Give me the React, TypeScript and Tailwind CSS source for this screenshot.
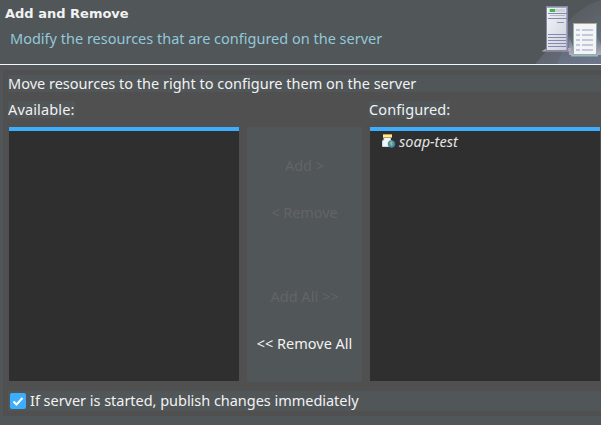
import React from "react";

function ServerBanner() {
  return (
    <svg className="h-16 w-[68px] shrink-0" viewBox="533 0 68 64" fill="none">
      <defs>
        <linearGradient id="beam" x1="560" y1="5" x2="595" y2="64" gradientUnits="userSpaceOnUse">
          <stop offset="0" stopColor="#54595c" />
          <stop offset="1" stopColor="#6b7180" />
        </linearGradient>
        <linearGradient id="inner" x1="575" y1="10" x2="590" y2="64" gradientUnits="userSpaceOnUse">
          <stop offset="0" stopColor="#585e63" />
          <stop offset="1" stopColor="#6d768a" />
        </linearGradient>
        <linearGradient id="tower" x1="0" y1="0" x2="1" y2="1">
          <stop offset="0" stopColor="#f2f4f6" />
          <stop offset="1" stopColor="#cdd1da" />
        </linearGradient>
        <linearGradient id="shade" x1="0" y1="0" x2="0" y2="1">
          <stop offset="0" stopColor="#aaa2b1" stopOpacity="0" />
          <stop offset="1" stopColor="#b4abba" />
        </linearGradient>
      </defs>
      <path d="M536 63C550 48 559 29 575 15Q588 3 601 0V64H536Z" fill="url(#beam)" />
      <path d="M557 64C564 45 574 28 601 12V64Z" fill="url(#inner)" />
      <path d="M542 51L547 48H571V51.5H542Z" fill="#a9a5b3" />
      <path d="M568 34L573 46V55H569Z" fill="url(#shade)" />
      <path d="M597 36L601 44V55H597Z" fill="url(#shade)" />
      <rect x="546.5" y="6.5" width="21" height="44" fill="url(#tower)" stroke="#8587ad" />
      <path d="M547 7.5H567M566.5 8V50" stroke="#a3a6c0" />
      <rect x="549" y="9" width="16" height="3" fill="#c9d3d0" />
      <rect x="550" y="9" width="5" height="3" fill="#42b74d" />
      <path d="M548 13.5H567M548 18.5H567M548 34.5H566M548 37.5H566M548 40.5H566M548 43.5H566M548 46.5H566" stroke="#8587b1" />
      <path d="M550 15.5H565" stroke="#b3b6cd" />
      <path d="M557 22.5H564" stroke="#8b91b7" />
      <path d="M571 55H598V56.5H571Z" fill="#a3b6b7" />
      <rect x="573.5" y="23.5" width="23" height="31" fill="#f2f4f6" stroke="#8daeae" />
      <path d="M573 23.5H597" stroke="#b8a58c" />
      <path d="M576 30H580M582 30H593M576 35H580M582 35H593M576 40H580M582 40H593M576 45H580M582 45H593M576 50H580M582 50H593" stroke="#b4bbd2" strokeWidth="1.7" />
    </svg>
  );
}

function ModuleIcon() {
  return (
    <svg className="h-4 w-4 shrink-0" viewBox="0 0 16 16">
      <path d="M3 4.5H9.5V6.5L10.5 8V13.5H1.5V8L3 6.5Z" fill="#f2f6fb" stroke="#c7d6e8" />
      <rect x="2" y="1" width="9" height="4" fill="#f6e7b8" />
      <path d="M2 1.5H11M2 4.5H11" stroke="#c6a43a" />
      <circle cx="10.5" cy="11" r="3.4" fill="#4f91b5" stroke="#3978a0" strokeWidth=".7" />
      <path d="M8.5 10L10 8.3 12 8.8 11 10.2 11.6 12 10 13 9.6 11Z" fill="#8fc475" />
    </svg>
  );
}

function ResourceList({ children }: { children?: React.ReactNode }) {
  return <div className="h-[254px] w-[230px] border-t-4 border-[#3daefd] bg-[#2f2f2f]">{children}</div>;
}

export default function App() {
  return (
    <main className="h-[425px] w-[601px] overflow-hidden whitespace-nowrap bg-[#515658] font-['Noto_Sans',sans-serif] text-[14.5px] leading-[16px] text-[#f2f2f2]">
      <header className="flex h-[65px] justify-between border-b border-[#f5f5f5]">
        <div className="pl-[5px] pt-[5px]">
          <h1 className="font-['DejaVu_Sans',sans-serif] text-[13px] font-bold leading-[18px]">Add and Remove</h1>
          <p className="ml-[5px] mt-[7px] text-[#93c8db]">Modify the resources that are configured on the server</p>
        </div>
        <ServerBanner />
      </header>
      <section className="ml-[3px] mt-[5px] h-[346px] bg-[#505050] pl-[5px] pt-[5px]">
        <p className="h-[17px] bg-[#515658]"><span>Move resources to the right to configure them on the server</span></p>
        <div className="mt-[9px] flex h-[17px]">
          <div className="w-[361px]"><span className="inline-block h-[17px] bg-[#515658] tracking-[0.15px]">Available:</span></div>
          <div><span className="inline-block h-[17px] bg-[#515658] tracking-[0.1px]">Configured:</span></div>
        </div>
        <div className="ml-px mt-[9px] flex gap-2">
          <ResourceList />
          <div className="flex h-[255px] w-[115px] flex-col items-center bg-[#515658] pt-[30px] text-[#646464]">
            <span>Add &gt;</span>
            <span className="mt-[31px] tracking-[-0.1px]">&lt; Remove</span>
            <span className="mt-[68px]">Add All &gt;&gt;</span>
            <span className="mt-[31px] text-[#f2f2f2]">&lt;&lt; Remove All</span>
          </div>
          <ResourceList>
            <div className="flex items-center gap-[2px] pl-[11px] pt-[2px] italic text-[#e4e4e4]"><ModuleIcon /><span>soap-test</span></div>
          </ResourceList>
        </div>
        <label className="mt-[9px] flex h-5 items-center bg-[#515658] pl-[2px]">
          <input type="checkbox" defaultChecked className="peer sr-only" />
          <span className="flex h-4 w-4 items-center justify-center rounded-[2px] bg-[#3daefd]">
            <svg className="h-4 w-4" viewBox="0 0 16 16"><path d="M3.5 8.5L6.5 11.5L12.5 5" fill="none" stroke="#fff" strokeWidth="2" /></svg>
          </span>
          <span className="ml-1 pb-[2px] tracking-[-0.03px]">If server is started, publish changes immediately</span>
        </label>
      </section>
    </main>
  );
}
